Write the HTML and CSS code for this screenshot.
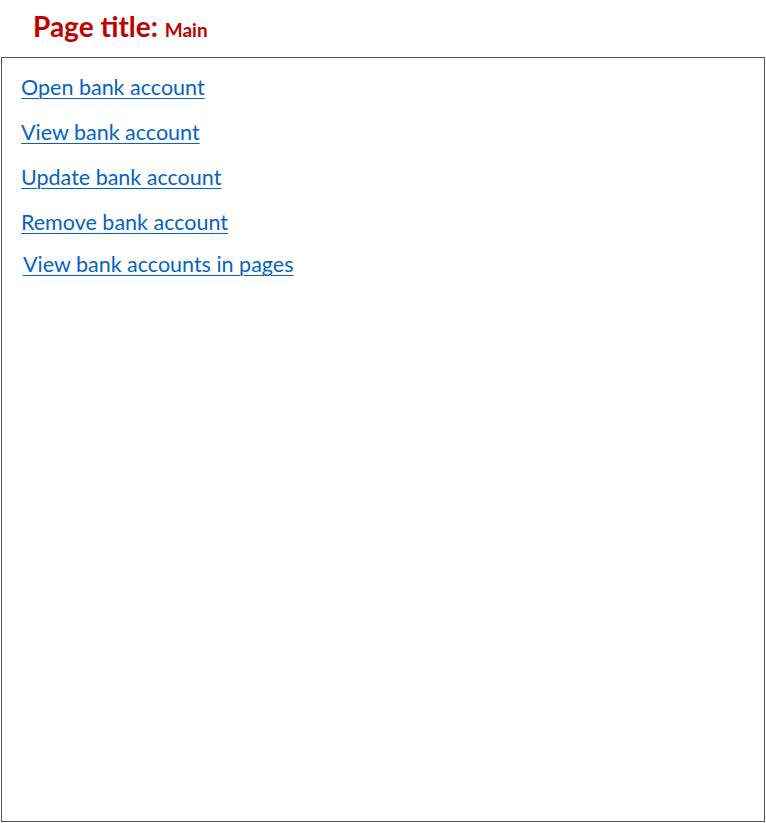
FILE: index.html
```html
<!DOCTYPE html>
<html>
<head>
<meta charset="utf-8">
<link rel="stylesheet" href="styles.css">
</head>
<body>
<header class="title-bar">
  <h1 class="page-title">Page title: <span class="page-name">Main</span></h1>
</header>
<main class="panel">
  <nav class="links">
    <a class="link" href="#">Open bank account</a>
    <a class="link" href="#">View bank account</a>
    <a class="link" href="#">Update bank account</a>
    <a class="link" href="#">Remove bank account</a>
    <a class="link link-last" href="#">View bank accounts in pages</a>
  </nav>
</main>
</body>
</html>
```
FILE: styles.css
```css
html, body {
  margin: 0;
  padding: 0;
  background: #ffffff;
}
body {
  width: 766px;
  height: 823px;
  font-family: Lato, "Open Sans", sans-serif;
  display: flex;
  flex-direction: column;
}
.title-bar {
  height: 57px;
  padding-left: 33px;
  box-sizing: border-box;
}
.page-title {
  margin: 0;
  padding-top: 9px;
  font-size: 28px;
  line-height: 34px;
  font-weight: 700;
  color: #c00000;
}
.page-name {
  font-size: 19px;
}
.panel {
  margin-left: 1px;
  width: 764px;
  height: 765px;
  box-sizing: border-box;
  border: 1px solid #555555;
}
.links {
  display: flex;
  flex-direction: column;
  padding: 16px 0 0 19px;
}
.link {
  color: #0563c1;
  font-size: 21.5px;
  line-height: 26px;
  height: 45px;
  text-decoration: underline;
  text-underline-offset: 3px;
  text-decoration-thickness: 1px;
  align-self: flex-start;
}
.link-last {
  margin-top: -3px;
  margin-left: 2px;
}
```
